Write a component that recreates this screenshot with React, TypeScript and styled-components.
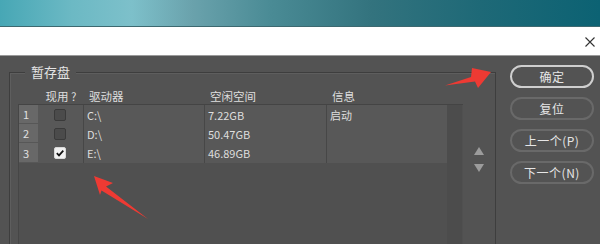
import styled, { createGlobalStyle } from "styled-components"

const GlobalStyle = createGlobalStyle`
  html, body {
    margin: 0;
    padding: 0;
  }
  body {
    width: 600px;
    height: 244px;
    overflow: hidden;
    background: #535353;
    font-family: "Noto Sans CJK SC", "Noto Sans", sans-serif;
    color: #dcdcdc;
  }
`

type Drive = { id: number; active: boolean; name: string; free: string; info: string }

const drives: Drive[] = [
  { id: 1, active: false, name: "C:\\", free: "7.22GB", info: "启动" },
  { id: 2, active: false, name: "D:\\", free: "50.47GB", info: "" },
  { id: 3, active: true, name: "E:\\", free: "46.89GB", info: "" }
]

function App() {
  return (
    <Screen>
      <GlobalStyle />
      <Backdrop />
      <TitleBar>
        <CloseIcon viewBox="0 0 10 10">
          <path d="M0.5 0.5 L9.5 9.5 M9.5 0.5 L0.5 9.5" />
        </CloseIcon>
      </TitleBar>
      <Dialog>
        <GroupBox>
          <Legend>暂存盘</Legend>
          <HeaderRow>
            <span />
            <HeaderCell $center>现用 ?</HeaderCell>
            <HeaderCell>驱动器</HeaderCell>
            <HeaderCell>空闲空间</HeaderCell>
            <HeaderCell>信息</HeaderCell>
          </HeaderRow>
          <TableArea>
            <List>
              <Rows>
                {drives.map((d) => (
                  <Row key={d.id} $tall={d.id === 3}>
                    <IndexCell>{d.id}</IndexCell>
                    <CheckCell>
                      <Checkbox $checked={d.active}>
                        {d.active && (
                          <svg viewBox="0 0 12 12" width="12" height="12">
                            <path d="M2.8 6.2 L5 8.4 L9.3 3.6" fill="none" stroke="#111" strokeWidth="1.7" />
                          </svg>
                        )}
                      </Checkbox>
                    </CheckCell>
                    <Cell>{d.name}</Cell>
                    <Cell>{d.free}</Cell>
                    <Cell $last>{d.info}</Cell>
                  </Row>
                ))}
              </Rows>
              <ScrollTrack />
            </List>
            <ArrowColumn>
              <Triangle viewBox="0 0 10 8">
                <path d="M5 0 L10 8 L0 8 Z" />
              </Triangle>
              <Triangle viewBox="0 0 10 8">
                <path d="M0 0 L10 0 L5 8 Z" />
              </Triangle>
            </ArrowColumn>
          </TableArea>
        </GroupBox>
        <ButtonColumn>
          <DialogButton $primary>确定</DialogButton>
          <DialogButton>复位</DialogButton>
          <DialogButton>上一个(P)</DialogButton>
          <DialogButton>下一个(N)</DialogButton>
        </ButtonColumn>
      </Dialog>
      <Annotations viewBox="0 0 600 244">
        <path d="M445 85.5 L471 77 L472 68 L491 72 L478 88 L475 81.5 Z" />
        <path d="M94 176 L113 183 L106 186.5 L148 219 L101.5 190.5 L100 195 Z" />
      </Annotations>
    </Screen>
  )
}

const Screen = styled.div`
  position: relative;
  width: 600px;
  height: 244px;
  display: flex;
  flex-direction: column;
  overflow: hidden;
`

const Backdrop = styled.div`
  height: 26px;
  flex: none;
  border-bottom: 1px solid #3d6970;
  background: linear-gradient(
    90deg,
    #47a7b5 0%,
    #6cb9c4 12%,
    #7dc0ca 22%,
    #6aa2ac 32%,
    #4a8b95 45%,
    #33737e 62%,
    #1e6977 80%,
    #0c6273 100%
  );
`

const TitleBar = styled.div`
  height: 28px;
  flex: none;
  background: #ffffff;
  border-bottom: 1px solid #9a9a9a;
  display: flex;
  align-items: center;
  justify-content: flex-end;
  padding-right: 5px;
`

const CloseIcon = styled.svg`
  width: 10px;
  height: 10px;
  stroke: #333;
  stroke-width: 1.1;
  margin-top: 1px;
`

const Dialog = styled.div`
  flex: 1;
  display: flex;
  padding-left: 9px;
  min-height: 0;
`

const GroupBox = styled.div`
  position: relative;
  margin-top: 16px;
  width: 487px;
  box-sizing: border-box;
  border: 1px solid #3e3e3e;
  border-bottom: none;
  box-shadow: inset 1px 1px 0 #5e5e5e;
  padding: 15px 0 0 8px;
  display: flex;
  flex-direction: column;
`

const Legend = styled.span`
  position: absolute;
  top: -10px;
  left: 15px;
  padding: 0 6px;
  background: #535353;
  font-size: 13px;
  line-height: 18px;
  color: #e4e4e4;
`

const columns = "19px 46px 121px 122px 120px"

const HeaderRow = styled.div`
  display: grid;
  grid-template-columns: ${columns};
  height: 25px;
  align-items: center;
  margin-left: 1px;
  font-size: 11.5px;
`

const HeaderCell = styled.span<{ $center?: boolean }>`
  text-align: ${(p) => (p.$center ? "center" : "left")};
  padding-left: ${(p) => (p.$center ? "0" : "5px")};
  color: #dedede;
`

const TableArea = styled.div`
  flex: 1;
  display: flex;
`

const List = styled.div`
  width: 444px;
  height: 140px;
  display: flex;
  background: #505050;
  border-top: 1px solid #444;
  border-left: 1px solid #464646;
`

const Rows = styled.div`
  width: 428px;
  display: flex;
  flex-direction: column;
`

const Row = styled.div<{ $tall?: boolean }>`
  display: grid;
  grid-template-columns: ${columns};
  height: ${(p) => (p.$tall ? "20px" : "19px")};
  background: #585858;
  font-size: 11px;
`

const IndexCell = styled.div`
  background: #686868;
  border-bottom: 1px solid #575757;
  padding-left: 4px;
  display: flex;
  align-items: center;
  color: #e0e0e0;
`

const CheckCell = styled.div`
  display: flex;
  align-items: center;
  justify-content: center;
  border-right: 1px solid #474747;
  padding-right: 1px;
`

const Checkbox = styled.div<{ $checked?: boolean }>`
  width: 12px;
  height: 12px;
  box-sizing: border-box;
  border: 1px solid ${(p) => (p.$checked ? "#d8d8d8" : "#3a3a3a")};
  border-radius: 2px;
  background: ${(p) => (p.$checked ? "#f2f2f2" : "#4b4b4b")};
  display: flex;
  align-items: center;
  justify-content: center;
  svg {
    flex: none;
  }
`

const Cell = styled.div<{ $last?: boolean }>`
  display: flex;
  align-items: center;
  padding-left: 3px;
  border-right: ${(p) => (p.$last ? "none" : "1px solid #474747")};
  color: #dedede;
`

const ScrollTrack = styled.div`
  width: 15px;
  background: #4c4c4c;
`

const ArrowColumn = styled.div`
  flex: 1;
  display: flex;
  flex-direction: column;
  align-items: center;
  padding-top: 43px;
  gap: 9px;
`

const Triangle = styled.svg`
  width: 10px;
  height: 8px;
  fill: #9c9c9c;
`

const ButtonColumn = styled.div`
  display: flex;
  flex-direction: column;
  gap: 9px;
  padding-top: 9px;
  margin-left: 14px;
`

const DialogButton = styled.div<{ $primary?: boolean }>`
  width: 84px;
  height: 23px;
  box-sizing: border-box;
  border: 2px solid ${(p) => (p.$primary ? "#cfcfcf" : "#696969")};
  border-radius: 12px;
  display: flex;
  align-items: center;
  justify-content: center;
  font-size: 12px;
  color: #e6e6e6;
  letter-spacing: 0.5px;
`

const Annotations = styled.svg`
  position: absolute;
  left: 0;
  top: 0;
  width: 600px;
  height: 244px;
  pointer-events: none;
  fill: #ee3a33;
`

export default App
